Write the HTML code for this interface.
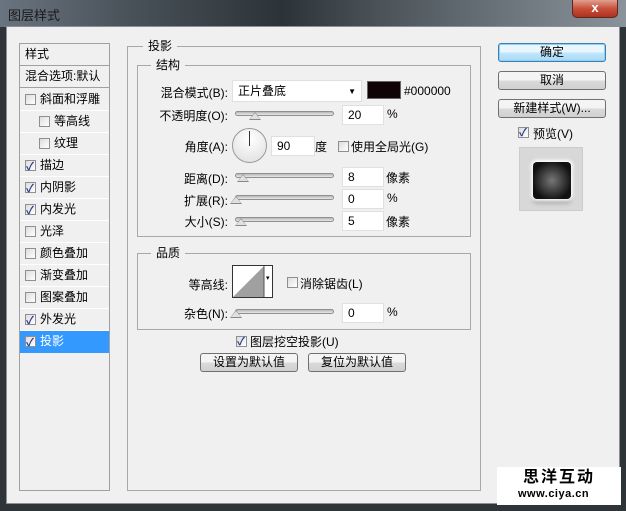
<!DOCTYPE html><html><head><meta charset="utf-8"><style>
*{margin:0;padding:0;box-sizing:border-box}
body{width:626px;height:511px;overflow:hidden;background:#2e3438;font-family:"Liberation Sans","Noto Sans CJK SC",sans-serif;font-size:12px;color:#000;position:relative}
.a{position:absolute}
#title{left:0;top:0;width:626px;height:27px;background:linear-gradient(90deg,#6a7480 0%,#4a525a 20%,#2c3338 45%,#4a5258 60%,#6a737a 80%,#8a939a 100%)}
#body{left:6px;top:26px;width:614px;height:478px;background:#f0f0f0;border:1px solid #8a9096}
.lp{left:19px;top:43px;width:91px;height:448px;border:1px solid #a0a0a0;background:#f0f0f0}
.it{position:absolute;left:0;width:89px;height:22px;border-bottom:1px solid #fff;line-height:21px;padding-left:20px}
.cb{position:absolute;width:11px;height:11px;border:1px solid #8e8f8f;background:linear-gradient(135deg,#dcdcdc,#fff)}
.ck::after{content:"✓";position:absolute;left:0;top:-4px;font-size:11px;color:#2a3a8a;font-weight:bold}
.fs{position:absolute;border:1px solid #a8a8a8}
.lg{position:absolute;background:#f0f0f0;padding:0 5px;font-size:12px}
.in{position:absolute;background:#fff;border:1px solid #e0e0e0;height:20px;line-height:19px;padding-left:5px;font-size:12px}
.sl{position:absolute;height:5px;border:1px solid #909090;border-radius:3px;background:linear-gradient(#b8b8b8,#e8e8e8)}
.th{position:absolute;width:0;height:0;border-left:6px solid transparent;border-right:6px solid transparent;border-bottom:8px solid #888}
.th::after{content:"";position:absolute;left:-5px;top:1px;border-left:5px solid transparent;border-right:5px solid transparent;border-bottom:6px solid #e0e0e0}
.lb{position:absolute;text-align:right;font-size:12px}
.bt{position:absolute;height:19px;border:1px solid #707070;border-radius:3px;background:linear-gradient(#f4f4f4 45%,#dadada 55%,#d0d0d0);text-align:center;line-height:17px;font-size:12px}
</style></head><body>
<div class="a" id="title"></div>
<div class="a" style="left:8px;top:5px;color:#1a1a1a;font-size:13px">图层样式</div>
<div class="a" style="left:572px;top:0;width:46px;height:18px;border:1px solid #5a2a22;border-top:none;border-radius:0 0 5px 5px;background:linear-gradient(#e0a090,#c8503a 50%,#b03020);color:#fff;text-align:center;font-weight:bold;line-height:16px;font-size:13px">x</div>
<div class="a" id="body"></div>
<div class="a lp">
<div class="it" style="top:0;height:22px;padding-left:5px;border-bottom:1px solid #a0a0a0">样式</div>
<div class="it" style="top:22px;padding-left:5px;border-bottom:1px solid #a0a0a0">混合选项:默认</div>
<div class="it" style="top:45px"><span class="cb" style="left:5px;top:5px"></span>斜面和浮雕</div>
<div class="it" style="top:67px;padding-left:34px"><span class="cb" style="left:19px;top:5px"></span>等高线</div>
<div class="it" style="top:89px;padding-left:34px"><span class="cb" style="left:19px;top:5px"></span>纹理</div>
<div class="it" style="top:111px"><span class="cb ck" style="left:5px;top:5px"></span>描边</div>
<div class="it" style="top:133px"><span class="cb ck" style="left:5px;top:5px"></span>内阴影</div>
<div class="it" style="top:155px"><span class="cb ck" style="left:5px;top:5px"></span>内发光</div>
<div class="it" style="top:177px"><span class="cb" style="left:5px;top:5px"></span>光泽</div>
<div class="it" style="top:199px"><span class="cb" style="left:5px;top:5px"></span>颜色叠加</div>
<div class="it" style="top:221px"><span class="cb" style="left:5px;top:5px"></span>渐变叠加</div>
<div class="it" style="top:243px"><span class="cb" style="left:5px;top:5px"></span>图案叠加</div>
<div class="it" style="top:265px"><span class="cb ck" style="left:5px;top:5px"></span>外发光</div>
<div class="it" style="top:287px;background:#3399ff;color:#fff;border:none"><span class="cb ck" style="left:5px;top:5px"></span>投影</div>
</div>
<div class="fs" style="left:127px;top:46px;width:354px;height:445px"></div>
<div class="lg" style="left:143px;top:37px">投影</div>
<div class="fs" style="left:137px;top:65px;width:334px;height:172px"></div>
<div class="lg" style="left:151px;top:56px">结构</div>
<div class="lb" style="left:150px;top:84px;width:78px">混合模式(B):</div>
<div class="in" style="left:232px;top:80px;width:130px;height:22px;line-height:21px">正片叠底<span style="position:absolute;right:5px;top:0;font-size:8px">▼</span></div>
<div class="a" style="left:367px;top:81px;width:34px;height:18px;background:#100306;border:1px solid #666"></div>
<div class="a" style="left:404px;top:84px">#000000</div>
<div class="lb" style="left:150px;top:107px;width:78px">不透明度(O):</div>
<div class="sl" style="left:235px;top:111px;width:99px"></div><div class="th" style="left:249px;top:112px"></div>
<div class="in" style="left:342px;top:105px;width:42px">20</div><div class="a" style="left:387px;top:107px">%</div>
<div class="lb" style="left:150px;top:138px;width:78px">角度(A):</div>
<div class="a" style="left:232px;top:128px;width:35px;height:35px;border:1px solid #999;border-radius:50%;background:radial-gradient(circle at 50% 30%,#fff,#ddd)"></div>
<div class="a" style="left:249px;top:131px;width:1px;height:15px;background:#333"></div>
<div class="in" style="left:271px;top:136px;width:44px">90</div><div class="a" style="left:315px;top:138px">度</div>
<div class="cb" style="left:338px;top:141px"></div><div class="a" style="left:351px;top:138px">使用全局光(G)</div>
<div class="lb" style="left:150px;top:170px;width:78px">距离(D):</div>
<div class="sl" style="left:235px;top:173px;width:99px"></div><div class="th" style="left:237px;top:174px"></div>
<div class="in" style="left:342px;top:167px;width:42px">8</div><div class="a" style="left:386px;top:169px">像素</div>
<div class="lb" style="left:150px;top:192px;width:78px">扩展(R):</div>
<div class="sl" style="left:235px;top:195px;width:99px"></div><div class="th" style="left:230px;top:196px"></div>
<div class="in" style="left:342px;top:189px;width:42px">0</div><div class="a" style="left:387px;top:191px">%</div>
<div class="lb" style="left:150px;top:213px;width:78px">大小(S):</div>
<div class="sl" style="left:235px;top:217px;width:99px"></div><div class="th" style="left:235px;top:218px"></div>
<div class="in" style="left:342px;top:211px;width:42px">5</div><div class="a" style="left:386px;top:213px">像素</div>
<div class="fs" style="left:137px;top:253px;width:334px;height:77px"></div>
<div class="lg" style="left:151px;top:244px">品质</div>
<div class="lb" style="left:150px;top:276px;width:78px">等高线:</div>
<div class="a" style="left:232px;top:265px;width:41px;height:33px;border:1px solid #333;background:#fff"><svg width="39" height="31"><polygon points="31,0 31,31 0,31" fill="#a0a0a0"/><line x1="31" y1="0" x2="31" y2="31" stroke="#555"/><text x="33" y="14" font-size="7">▾</text></svg></div>
<div class="cb" style="left:287px;top:277px"></div><div class="a" style="left:300px;top:275px">消除锯齿(L)</div>
<div class="lb" style="left:150px;top:305px;width:78px">杂色(N):</div>
<div class="sl" style="left:235px;top:309px;width:99px"></div><div class="th" style="left:230px;top:310px"></div>
<div class="in" style="left:342px;top:303px;width:42px">0</div><div class="a" style="left:387px;top:305px">%</div>
<div class="cb ck" style="left:236px;top:336px"></div><div class="a" style="left:250px;top:333px">图层挖空投影(U)</div>
<div class="bt" style="left:200px;top:353px;width:98px">设置为默认值</div>
<div class="bt" style="left:308px;top:353px;width:98px">复位为默认值</div>
<div class="bt" style="left:498px;top:43px;width:108px;border-color:#3c7fb1;background:linear-gradient(#eaf6fd 45%,#bee6fd 55%,#a7d9f5);box-shadow:0 0 0 1px #8fd0f0 inset">确定</div>
<div class="bt" style="left:498px;top:71px;width:108px">取消</div>
<div class="bt" style="left:498px;top:99px;width:108px">新建样式(W)...</div>
<div class="cb ck" style="left:518px;top:127px"></div><div class="a" style="left:533px;top:125px">预览(V)</div>
<div class="a" style="left:519px;top:147px;width:64px;height:64px;background:#d8d8d8;border:1px solid #ccc"></div>
<div class="a" style="left:533px;top:162px;width:38px;height:37px;border-radius:4px;background:radial-gradient(circle,#777,#111 75%);box-shadow:0 0 3px 2px #fff,0 4px 4px #999"></div>
<div class="a" style="left:497px;top:467px;width:124px;height:38px;background:#fff"></div>
<div class="a" style="left:523px;top:469px;font-size:16px;line-height:18px;font-weight:bold;letter-spacing:2px">思洋互动</div>
<div class="a" style="left:518px;top:488px;font-size:11px;line-height:13px;font-weight:bold;letter-spacing:0.5px">www.ciya.cn</div>
</body></html>
